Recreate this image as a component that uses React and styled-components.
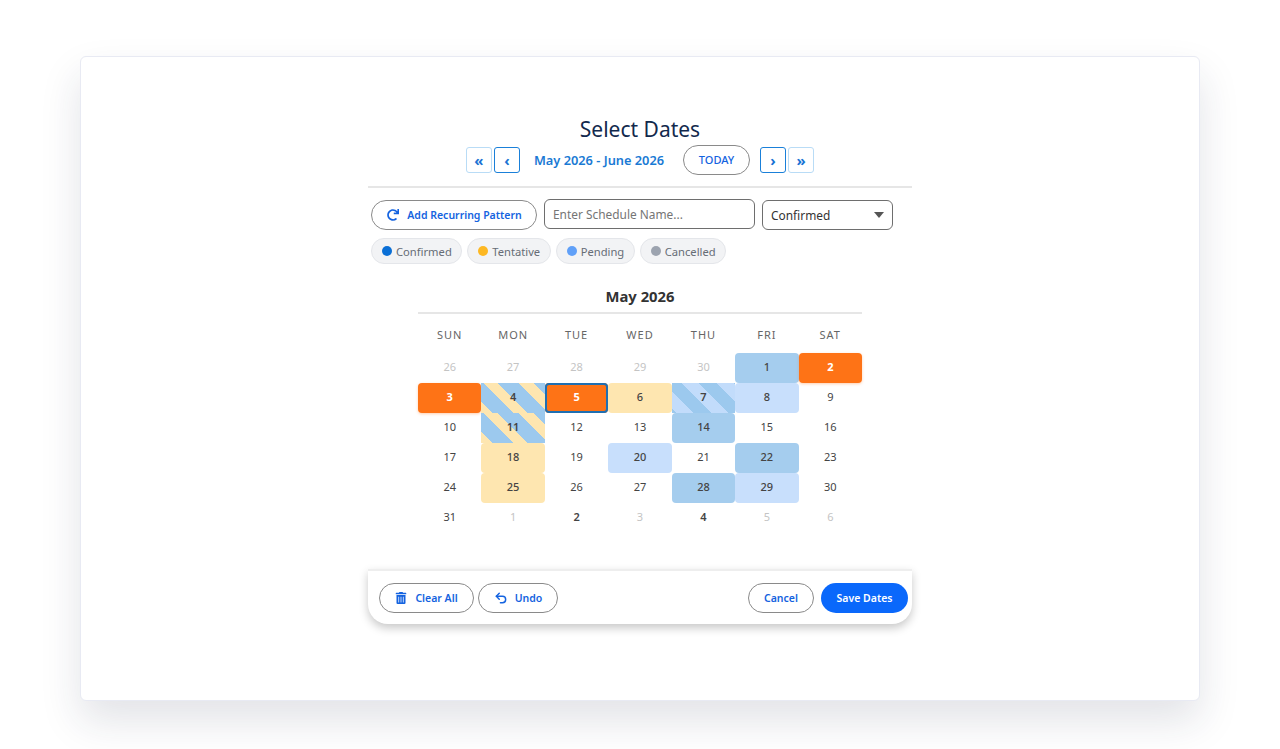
import React from 'react';
import styled, { createGlobalStyle } from 'styled-components';
import { LuUndo2 } from 'react-icons/lu';
import { FaRedo, FaTrashAlt } from 'react-icons/fa';

const GlobalStyle = createGlobalStyle`
    html, body {
        margin: 0;
        background: #fff;
        font-family: 'Noto Sans', 'Open Sans', sans-serif;
    }
`;

const Page = styled.div`
    height: 749px;
    box-sizing: border-box;
    padding: 56px 80px 48px 80px;
    overflow: hidden;
`;

const Card = styled.div`
    height: 645px;
    box-sizing: border-box;
    background: #fff;
    border: 1px solid #e8eaf3;
    border-radius: 6px;
    box-shadow: 0 20px 40px rgba(30, 40, 70, 0.13);
    padding: 57px 0 0;
    display: flex;
    flex-direction: column;
    align-items: center;
`;

const Column = styled.div`
    width: 544px;
    display: flex;
    flex-direction: column;
`;

const Title = styled.h1`
    margin: 0;
    height: 30px;
    line-height: 30px;
    text-align: center;
    font-size: 21px;
    font-weight: 400;
    color: #12294d;
`;

const NavRow = styled.div`
    height: 32px;
    display: flex;
    align-items: center;
    justify-content: center;
    padding-bottom: 10px;
    border-bottom: 2px solid #e6e6e6;
`;

const NavButton = styled.button`
    width: 26px;
    height: 26px;
    padding: 0;
    margin-left: ${props => props.$gap || 0}px;
    box-sizing: border-box;
    background: #fff;
    border: ${props => props.$strong ? '1.5px solid #1a80d9' : '1.5px solid #b9dcf6'};
    border-radius: 3px;
    color: #1a73d4;
    font: 700 15px/20px 'Noto Sans', sans-serif;
    display: flex;
    align-items: center;
    justify-content: center;
`;

const RangeLabel = styled.span`
    margin: 0 19px 0 14px;
    font-size: 12.8px;
    font-weight: 600;
    color: #1a7ad4;
`;

const Pill = styled.button`
    height: 30px;
    width: ${props => props.$width}px;
    padding: 0;
    box-sizing: border-box;
    background: #fff;
    border: 1.5px solid #8a8a8a;
    border-radius: 999px;
    color: #1463e0;
    font: 600 10.5px/16px 'Noto Sans', sans-serif;
    display: flex;
    align-items: center;
    justify-content: center;
    gap: ${props => props.$iconGap || 8}px;
`;

const TodayPill = styled(Pill)`
    font-size: 11px;
    font-weight: 500;
`;

const Toolbar = styled.div`
    display: flex;
    align-items: flex-start;
    margin-top: 11px;
    padding-left: 3px;
`;

const RecurringPill = styled(Pill)`
    margin-top: 1px;
    padding-left: 1px;
`;

const NameInput = styled.input`
    width: 211px;
    height: 30px;
    margin-left: 7px;
    padding: 0 8px;
    box-sizing: border-box;
    border: 1px solid #6e6e6e;
    border-radius: 6px;
    font: 400 11.9px 'Noto Sans', sans-serif;
    color: #333;
    outline: none;

    ::placeholder {
        color: #666;
        opacity: 1;
    }
`;

const StatusSelect = styled.div`
    width: 131px;
    height: 30px;
    margin: 1px 0 0 7px;
    padding: 0 8px;
    box-sizing: border-box;
    border: 1px solid #6e6e6e;
    border-radius: 6px;
    font-size: 11.9px;
    color: #333;
    display: flex;
    align-items: center;
    justify-content: space-between;
`;

const Caret = styled.span`
    width: 0;
    height: 0;
    margin-right: 0;
    border-left: 5.5px solid transparent;
    border-right: 5.5px solid transparent;
    border-top: 6px solid #555;
`;

const Legend = styled.div`
    display: flex;
    gap: 5px;
    margin-top: 8px;
    padding-left: 3px;
`;

const Chip = styled.div`
    height: 26px;
    box-sizing: border-box;
    padding: 0 9.5px 0 10px;
    background: #f2f3f5;
    border: 1px solid #e4e6ea;
    border-radius: 13px;
    font-size: 11.2px;
    color: #666d76;
    display: flex;
    align-items: center;
    gap: 4px;
`;

const Dot = styled.span`
    width: 10px;
    height: 10px;
    border-radius: 50%;
    background: ${props => props.$color};
`;

const Calendar = styled.div`
    width: 444px;
    margin: 22px auto 0;
`;

const MonthTitle = styled.div`
    height: 28px;
    box-sizing: border-box;
    border-bottom: 2px solid #e6e6e6;
    text-align: center;
    font-size: 14.8px;
    line-height: 20px;
    font-weight: 700;
    color: #333;
`;

const Grid = styled.div`
    display: grid;
    grid-template-columns: repeat(7, 1fr);
    grid-template-rows: 39px repeat(6, 30px);
`;

const WeekDay = styled.div`
    padding-top: 1px;
    box-sizing: border-box;
    display: flex;
    align-items: center;
    justify-content: center;
    font-size: 11px;
    letter-spacing: 1px;
    color: #666;
`;

const fills = {
    blue: 'background: #a5cdee; font-weight: 500;',
    light: 'background: #c8dffc; font-weight: 500;',
    yellow: 'background: #fee6b0; font-weight: 500;',
    orange: 'background: #fe7316; box-shadow: 0 1px 3px rgba(254, 115, 22, 0.35);',
    selected: 'background: #fe7316; box-shadow: inset 0 0 0 2px #1f6fb2;',
    yellowBlue: 'background: repeating-linear-gradient(45deg, #fee6b0 0 8px, #9cc9ee 8px 23px, #fee6b0 23px 25px);',
    blueLight: 'background: repeating-linear-gradient(45deg, #9cc9ee 0 3px, #c2dcfb 3px 15px, #9cc9ee 15px 25px);',
};

const Day = styled.div`
    padding-bottom: 3px;
    box-sizing: border-box;
    display: flex;
    align-items: center;
    justify-content: center;
    font-size: 11px;
    font-weight: ${props => props.$bold ? 600 : 400};
    color: ${props => props.$muted ? '#c4c4c4' : '#444'};
    border-radius: ${props => props.$square ? 0 : 4}px;
    ${props => props.$fill && fills[props.$fill]}
    ${props => (props.$fill === 'orange' || props.$fill === 'selected') && 'color: #fff; font-weight: 700;'}
    ${props => props.$bold && 'font-weight: 600;'}
`;

const Footer = styled.div`
    height: 55px;
    margin-top: 36px;
    box-sizing: border-box;
    padding: 0 4px 0 11px;
    background: #fff;
    border-top: 2px solid #eee;
    border-radius: 0 0 20px 20px;
    box-shadow: 0 4px 10px rgba(0, 0, 0, 0.22);
    display: flex;
    align-items: center;
    justify-content: space-between;
`;

const FooterGroup = styled.div`
    display: flex;
    align-items: center;
    gap: 4px;
`;

const FooterGroupRight = styled(FooterGroup)`
    gap: 7px;
`;

const SaveButton = styled.button`
    width: 87px;
    height: 30px;
    padding: 0;
    background: #0a68fb;
    border: 0;
    border-radius: 15px;
    color: #fff;
    font: 600 10.5px/16px 'Noto Sans', sans-serif;
`;

const NextButton = styled(NavButton)`
    margin-left: 10px;
`;

const days = [
    { n: 26, muted: true }, { n: 27, muted: true }, { n: 28, muted: true }, { n: 29, muted: true }, { n: 30, muted: true }, { n: 1, fill: 'blue' }, { n: 2, fill: 'orange' },
    { n: 3, fill: 'orange' }, { n: 4, fill: 'yellowBlue', square: true, bold: true }, { n: 5, fill: 'selected' }, { n: 6, fill: 'yellow' }, { n: 7, fill: 'blueLight', square: true, bold: true }, { n: 8, fill: 'light' }, { n: 9 },
    { n: 10 }, { n: 11, fill: 'yellowBlue', square: true, bold: true }, { n: 12 }, { n: 13 }, { n: 14, fill: 'blue' }, { n: 15 }, { n: 16 },
    { n: 17 }, { n: 18, fill: 'yellow' }, { n: 19 }, { n: 20, fill: 'light' }, { n: 21 }, { n: 22, fill: 'blue' }, { n: 23 },
    { n: 24 }, { n: 25, fill: 'yellow' }, { n: 26 }, { n: 27 }, { n: 28, fill: 'blue' }, { n: 29, fill: 'light' }, { n: 30 },
    { n: 31 }, { n: 1, muted: true }, { n: 2, bold: true }, { n: 3, muted: true }, { n: 4, bold: true }, { n: 5, muted: true }, { n: 6, muted: true },
];

const weekDays = ['SUN', 'MON', 'TUE', 'WED', 'THU', 'FRI', 'SAT'];

const legend = [
    { label: 'Confirmed', color: '#0a6fd6' },
    { label: 'Tentative', color: '#fdb823' },
    { label: 'Pending', color: '#60a0f8' },
    { label: 'Cancelled', color: '#9ca3af' },
];

export default function App() {
    return (
        <Page>
            <GlobalStyle />
            <Card>
                <Column>
                    <Title>Select Dates</Title>
                    <NavRow>
                        <NavButton>«</NavButton>
                        <NavButton $strong $gap={2}>‹</NavButton>
                        <RangeLabel>May 2026 - June 2026</RangeLabel>
                        <TodayPill $width={67}>TODAY</TodayPill>
                        <NextButton $strong>›</NextButton>
                        <NavButton $gap={2}>»</NavButton>
                    </NavRow>
                    <Toolbar>
                        <RecurringPill $width={166}><FaRedo size={12} />Add Recurring Pattern</RecurringPill>
                        <NameInput placeholder="Enter Schedule Name..." />
                        <StatusSelect>Confirmed<Caret /></StatusSelect>
                    </Toolbar>
                    <Legend>
                        {legend.map(item => (
                            <Chip key={item.label}><Dot $color={item.color} />{item.label}</Chip>
                        ))}
                    </Legend>
                    <Calendar>
                        <MonthTitle>May 2026</MonthTitle>
                        <Grid>
                            {weekDays.map(d => <WeekDay key={d}>{d}</WeekDay>)}
                            {days.map((d, i) => (
                                <Day key={i} $muted={d.muted} $fill={d.fill} $square={d.square} $bold={d.bold}>{d.n}</Day>
                            ))}
                        </Grid>
                    </Calendar>
                    <Footer>
                        <FooterGroup>
                            <Pill $width={95}><FaTrashAlt size={12} />Clear All</Pill>
                            <Pill $width={80} $iconGap={7}><LuUndo2 size={14} strokeWidth={2.5} />Undo</Pill>
                        </FooterGroup>
                        <FooterGroupRight>
                            <Pill $width={66}>Cancel</Pill>
                            <SaveButton>Save Dates</SaveButton>
                        </FooterGroupRight>
                    </Footer>
                </Column>
            </Card>
        </Page>
    );
}
